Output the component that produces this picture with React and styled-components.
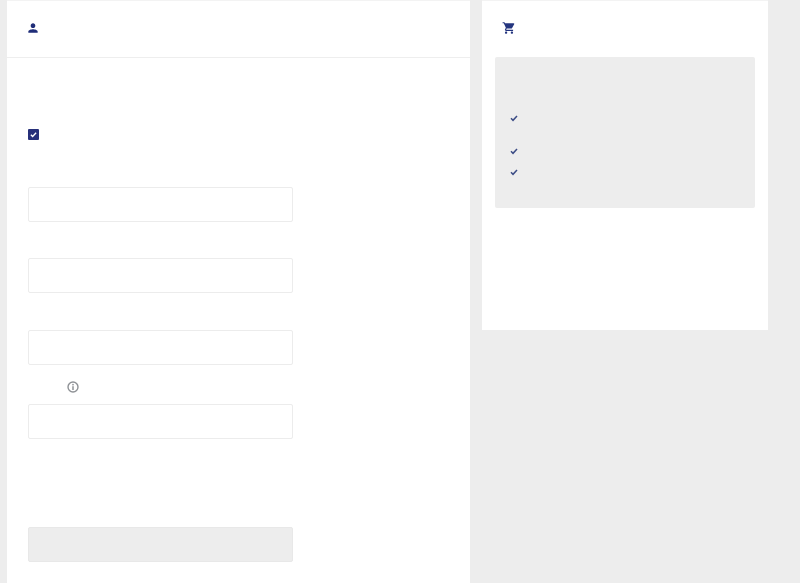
import styled, { createGlobalStyle } from "styled-components";
import { MdPerson, MdShoppingCart } from "react-icons/md";

const GlobalStyle = createGlobalStyle`
    html, body {
        margin: 0;
        padding: 0;
        height: 100%;
        background-color: #ededed;
        font-family: "Liberation Sans", Arial, sans-serif;
    }
`;

const Page = styled.div`
    display: flex;
    align-items: flex-start;
    gap: 12px;
    height: 583px;
    padding-left: 7px;
    overflow: hidden;
    box-sizing: border-box;
`;

const Card = styled.section`
    flex: none;
    width: ${(props) => props.$width}px;
    height: ${(props) => props.$height}px;
    background-color: #ffffff;
    border-top: 1px solid #f3f3f3;
    box-sizing: border-box;
`;

const CardHeader = styled.header`
    display: flex;
    align-items: center;
    height: 57px;
    padding: 0 0 3px 19px;
    box-sizing: border-box;
    color: #1f2d78;
    font-size: 14px;
    border-bottom: 1px solid #eeeeee;
`;

const CartHeader = styled.header`
    display: flex;
    align-items: center;
    height: 54px;
    padding-left: 20px;
    box-sizing: border-box;
    color: #24357f;
    font-size: 14px;
`;

const Form = styled.form`
    display: flex;
    flex-direction: column;
    align-items: flex-start;
    padding-left: 21px;
`;

const CheckBox = styled.span`
    display: flex;
    align-items: center;
    justify-content: center;
    width: 11px;
    height: 11px;
    margin-top: 71px;
    border-radius: 1px;
    background-color: #27307a;
    color: #ffffff;
`;

const Input = styled.div`
    width: 265px;
    height: 35px;
    margin-top: ${(props) => props.$top}px;
    border: 1px solid #ececec;
    border-radius: 2px;
    box-sizing: border-box;
    background-color: #ffffff;
`;

const HintIcon = styled.svg`
    display: block;
    width: 12px;
    height: 12px;
    margin: 16px 0 11px 39px;
    color: #8f9296;
`;

const SubmitButton = styled.div`
    width: 265px;
    height: 35px;
    margin-top: 88px;
    border: 1px solid #e8e8e8;
    border-radius: 2px;
    box-sizing: border-box;
    background-color: #ededed;
`;

const SummaryPanel = styled.div`
    height: 151px;
    margin: 2px 13px 0 13px;
    padding: 50px 0 0 15px;
    border-radius: 2px;
    box-sizing: border-box;
    background-color: #ededed;
`;

const CheckRow = styled.div`
    display: flex;
    align-items: center;
    height: 21px;
    margin-bottom: ${(props) => props.$gap || 0}px;
    color: #3b4c85;
`;

const CheckIcon = styled.svg`
    display: block;
    width: ${(props) => props.$size}px;
    height: ${(props) => props.$size}px;
`;

function Check({ size }) {
    return (
        <CheckIcon $size={size} viewBox="0 0 24 24" fill="none" stroke="currentColor" strokeWidth="4.5">
            <path d="M3 13l6 6L21 6" />
        </CheckIcon>
    );
}

function App() {
    return (
        <>
            <GlobalStyle />
            <Page>
                <Card $width={463} $height={600}>
                    <CardHeader>
                        <MdPerson />
                    </CardHeader>
                    <Form>
                        <CheckBox>
                            <Check size={7} />
                        </CheckBox>
                        <Input $top={47} />
                        <Input $top={36} />
                        <Input $top={37} />
                        <HintIcon viewBox="0 0 12 12">
                            <circle cx="6" cy="6" r="5" fill="none" stroke="currentColor" strokeWidth="1.4" />
                            <rect x="5.25" y="2.9" width="1.5" height="1.5" fill="currentColor" />
                            <rect x="5.25" y="5.2" width="1.5" height="3.8" fill="currentColor" />
                        </HintIcon>
                        <Input $top={0} />
                        <SubmitButton />
                    </Form>
                </Card>
                <Card $width={286} $height={330}>
                    <CartHeader>
                        <MdShoppingCart />
                    </CartHeader>
                    <SummaryPanel>
                        <CheckRow $gap={12}>
                            <Check size={8} />
                        </CheckRow>
                        <CheckRow>
                            <Check size={8} />
                        </CheckRow>
                        <CheckRow>
                            <Check size={8} />
                        </CheckRow>
                    </SummaryPanel>
                </Card>
            </Page>
        </>
    );
}

export default App;
